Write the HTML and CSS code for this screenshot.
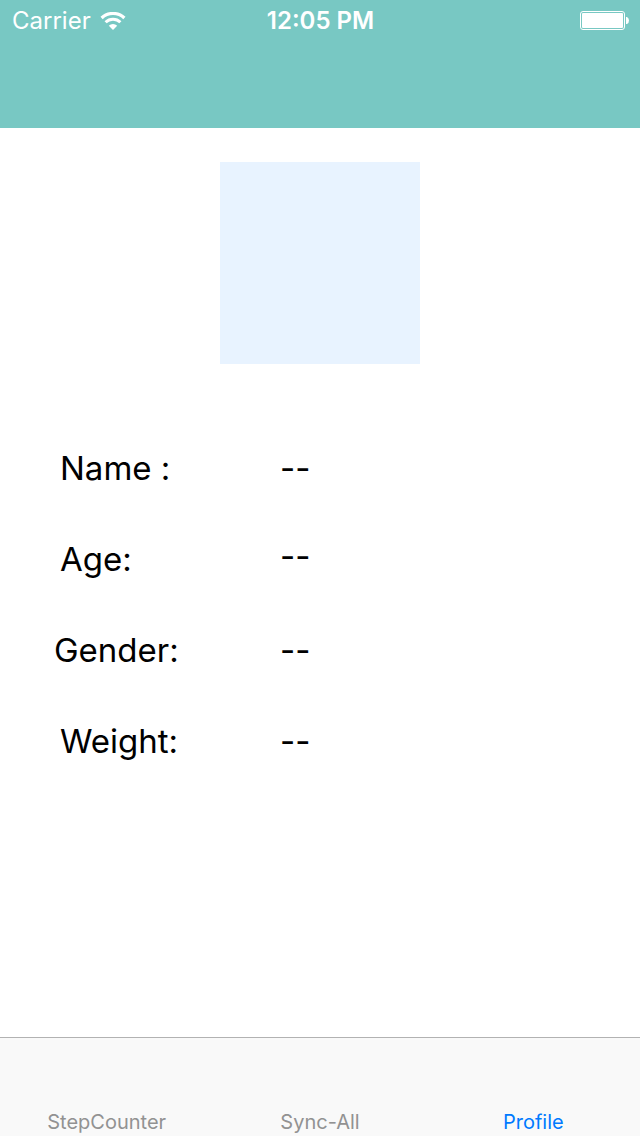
FILE: index.html
```html
<!DOCTYPE html>
<html lang="en">
<head>
<meta charset="utf-8">
<meta name="viewport" content="width=device-width, initial-scale=1">
<title>Profile</title>
<link rel="stylesheet" href="styles.css">
</head>
<body>
<div class="screen">
  <header class="header">
    <div class="status">
      <div class="carrier">
        <span>Carrier</span>
        <svg class="wifi" viewBox="0 0 26 18" aria-hidden="true">
          <path d="M1.6 6a16.5 16.5 0 0 1 22.8 0" fill="none" stroke="currentColor" stroke-width="3.2"/>
          <path d="M5.6 10.3a10.6 10.6 0 0 1 14.8 0" fill="none" stroke="currentColor" stroke-width="3"/>
          <path d="M13 18l-4.2-4.2a6 6 0 0 1 8.4 0z" fill="currentColor"/>
        </svg>
      </div>
      <time class="clock">12:05 PM</time>
      <svg class="battery" viewBox="0 0 49 19" aria-hidden="true">
        <rect x=".5" y=".5" width="44" height="18" rx="2.5" fill="none" stroke="currentColor"/>
        <rect x="2" y="2" width="41" height="15" rx="1" fill="currentColor"/>
        <path d="M46 6h1q2 1 2 3.5t-2 3.5h-1z" fill="currentColor"/>
      </svg>
    </div>
  </header>
  <main class="content">
    <div class="photo"></div>
    <dl class="details">
      <dt>Name :</dt><dd>--</dd>
      <dt>Age:</dt><dd class="raised">--</dd>
      <dt class="wide">Gender:</dt><dd>--</dd>
      <dt>Weight:</dt><dd>--</dd>
    </dl>
  </main>
  <nav class="tabs">
    <a class="tab" href="#steps">StepCounter</a>
    <a class="tab" href="#sync">Sync-All</a>
    <a class="tab active" href="#profile" aria-current="page">Profile</a>
  </nav>
</div>
</body>
</html>
```
FILE: styles.css
```css
* {
  box-sizing: border-box;
}

body {
  margin: 0;
  background: #fff;
  color: #000;
  font-family: Inter, "Liberation Sans", sans-serif;
}

.screen {
  display: flex;
  flex-direction: column;
  min-height: 100vh;
}

.header {
  padding-bottom: 87px;
  background: #78c8c3;
}

.status {
  display: grid;
  grid-template-columns: 1fr auto 1fr;
  align-items: center;
  height: 41px;
  padding: 0 11px 0 12px;
  color: #fff;
  font-size: 24px;
}

.carrier {
  display: flex;
  align-items: center;
  gap: 9px;
}

.wifi {
  width: 26px;
  height: 18px;
}

.clock {
  font-weight: 600;
}

.battery {
  justify-self: end;
  width: 49px;
  height: 19px;
}

.content {
  flex: 1;
  padding-top: 34px;
}

.photo {
  width: 200px;
  height: 202px;
  margin: 0 auto;
  background: #e8f3ff;
}

.details {
  display: grid;
  grid-template-columns: 220px 1fr;
  grid-auto-rows: 91px;
  align-items: center;
  margin: 58px 0 0;
  padding-left: 60px;
  font-size: 33px;
  line-height: 40px;
}

.details dd {
  margin: 0;
}

.details .raised {
  padding-bottom: 6px;
}

.details .wide {
  margin-left: -6px;
}

.tabs {
  display: grid;
  grid-template-columns: repeat(3, 1fr);
  height: 99px;
  border-top: 1px solid #b2b2b2;
  background: #f9f9f9;
}

.tab {
  display: flex;
  align-items: flex-end;
  justify-content: center;
  padding-bottom: 2px;
  color: #929292;
  font-size: 20px;
  line-height: 24px;
  text-decoration: none;
}

.tab.active {
  color: #007aff;
}
```
